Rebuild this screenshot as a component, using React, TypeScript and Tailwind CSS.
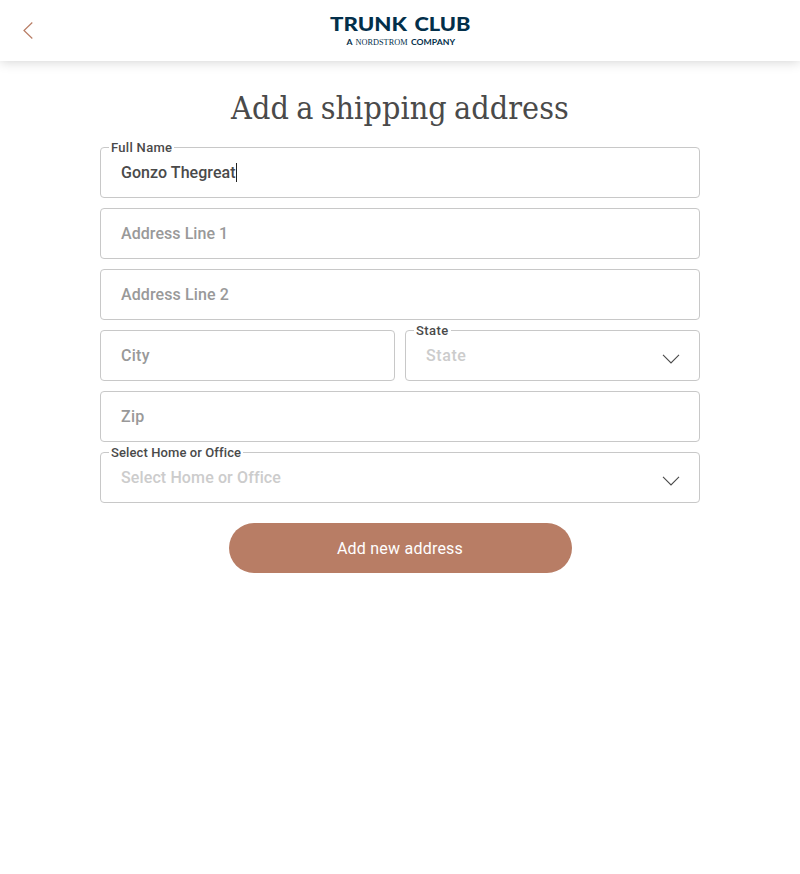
import type { ReactNode } from 'react';

type FieldProps = {
  label?: string;
  labelClass?: string;
  select?: boolean;
  children: ReactNode;
};

function Field({ label, labelClass = '', select = false, children }: FieldProps) {
  return (
    <div className="relative flex h-[51px] min-w-0 flex-1 items-center justify-between rounded border border-[#c8c8c8] bg-white pr-[19px] pl-5 text-base font-medium">
      {label && (
        <span
          className={`absolute -top-2 left-2 bg-white px-[2px] text-[13px] leading-[16px] whitespace-nowrap text-[#4a4a4a] ${labelClass}`}
        >
          {label}
        </span>
      )}
      {children}
      {select && (
        <svg className="mt-[6px] h-[10px] w-[18px]" viewBox="0 0 18 10" fill="none" stroke="#4a4a4a" strokeWidth="1.1">
          <path d="M1 0.8 9 9 17 0.8" />
        </svg>
      )}
    </div>
  );
}

function Logo() {
  return (
    <svg className="overflow-visible" width="144" height="44" viewBox="0 -5 144 44" fill="#032f4a" role="img" aria-label="Trunk Club">
      <text x="2" y="17" fontFamily="Lato, sans-serif" fontWeight="900" fontSize="19.5" textLength="77" lengthAdjust="spacingAndGlyphs">
        TRUNK
      </text>
      <text x="86.5" y="17" fontFamily="Lato, sans-serif" fontWeight="900" fontSize="19.5" textLength="56" lengthAdjust="spacingAndGlyphs">
        CLUB
      </text>
      <text x="18.5" y="31.3" fontFamily="Lato, sans-serif" fontWeight="700" fontSize="8" textLength="6" lengthAdjust="spacingAndGlyphs">
        A
      </text>
      <text x="27.5" y="31.3" fontFamily="Liberation Serif, serif" fontSize="9" textLength="52" lengthAdjust="spacingAndGlyphs">
        NORDSTROM
      </text>
      <text x="83" y="31.3" fontFamily="Lato, sans-serif" fontWeight="700" fontSize="8" textLength="44" lengthAdjust="spacingAndGlyphs">
        COMPANY
      </text>
    </svg>
  );
}

export default function App() {
  return (
    <div className="min-h-screen bg-white font-[Roboto,sans-serif] text-[#4a4a4a]">
      <header className="grid h-[61px] grid-cols-[1fr_144px_1fr] items-center bg-white shadow-[0_0_12px_rgba(0,0,0,0.2)]">
        <button className="ml-[22px] h-[17px] w-[11px]" aria-label="Back">
          <svg className="block" width="11" height="17" viewBox="0 0 11 17" fill="none" stroke="#b87d65" strokeWidth="1.2">
            <path d="M10.3 0.5 2 8.5 10.3 16.5" />
          </svg>
        </button>
        <Logo />
      </header>

      <main className="mx-auto flex w-[600px] flex-col items-center pt-[26px]">
        <h1 className="h-[60px] font-['DejaVu_Serif_Condensed','DejaVu_Serif',serif] text-[32px] leading-[42px] font-normal tracking-[0.08px] whitespace-nowrap [font-stretch:condensed] [word-spacing:-2px]">
          Add a shipping address
        </h1>
        <form className="flex w-full flex-col gap-[10px]">
          <div className="flex">
            <Field label="Full Name" labelClass="tracking-[0.3px]">
              <span className="flex items-center">
                <span className="tracking-[0.06px]">Gonzo Thegreat</span>
                <span className="h-[19px] w-px bg-[#222]" />
              </span>
            </Field>
          </div>
          <div className="flex">
            <Field>
              <span className="tracking-[0.06px] text-[#999]">Address Line 1</span>
            </Field>
          </div>
          <div className="flex">
            <Field>
              <span className="tracking-[0.1px] text-[#999]">Address Line 2</span>
            </Field>
          </div>
          <div className="flex gap-[10px]">
            <Field>
              <span className="tracking-[0.3px] text-[#999]">City</span>
            </Field>
            <Field label="State" labelClass="tracking-[0.4px]" select>
              <span className="tracking-[0.6px] text-[#ccc]">State</span>
            </Field>
          </div>
          <div className="flex">
            <Field>
              <span className="tracking-[0.3px] text-[#999]">Zip</span>
            </Field>
          </div>
          <div className="flex">
            <Field label="Select Home or Office" labelClass="tracking-[0.1px]" select>
              <span className="tracking-[0.12px] text-[#ccc]">Select Home or Office</span>
            </Field>
          </div>
        </form>
        <button className="mt-5 ml-px h-[50px] w-[343px] rounded-full bg-[#b87d65] pt-[2px] pr-px text-base tracking-[0.22px] text-white">
          Add new address
        </button>
      </main>
    </div>
  );
}
